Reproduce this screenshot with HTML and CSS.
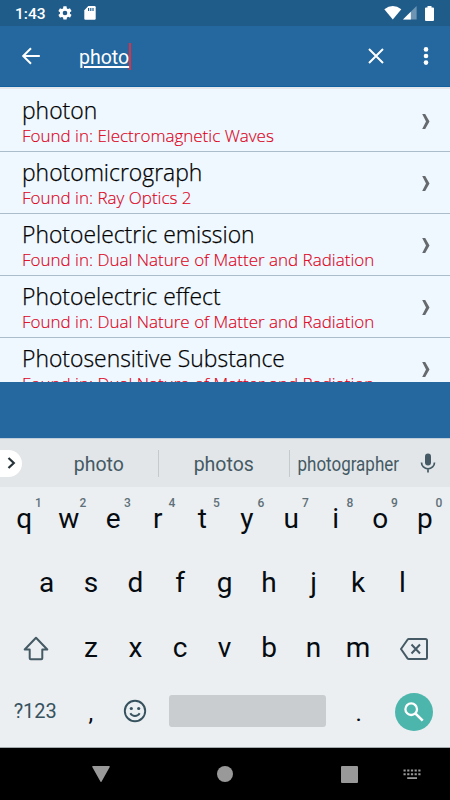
FILE: index.html
```
<!DOCTYPE html>
<html lang="en">
<head>
    <meta charset="UTF-8">
    <title>Search</title>
    <link rel="stylesheet" href="styles.css">
</head>
<body>
<div class="status">
    <span class="time">1:43</span>
    <svg class="gear" width="16" height="16" viewBox="0 0 24 24"><path fill="#fff" d="M19.4 13c0-.3.1-.6.1-1s0-.7-.1-1l2.1-1.600c.2-.2.2-.4.100-.6l-2-3.500c-.1-.2-.4-.3-.6-.2l-2.500 1c-.5-.4-1.100-.7-1.700-1l-.4-2.600c0-.3-.2-.5-.4-.5h-4c-.3 0-.5.2-.5.4l-.4 2.700c-.6.2-1.100.6-1.700 1l-2.500-1c-.2-.1-.5 0-.6.200l-2 3.500c-.1.200-.1.500.1.600l2.100 1.600c0 .3-.1.600-.1 1s0 .7.100 1l-2.100 1.600c-.2.200-.2.400-.1.600l2 3.500c.1.200.4.300.6.200l2.500-1c.5.400 1.100.7 1.700 1l.4 2.600c0 .3.200.4.500.4h4c.2 0 .5-.2.500-.4l.4-2.700c.6-.2 1.200-.6 1.700-1l2.500 1c.2.100.5 0 .6-.2l2-3.500c.1-.2.100-.5-.1-.6zM12 15.500a3.500 3.500 0 1 1 0-7 3.500 3.500 0 0 1 0 7z"/></svg>
    <svg class="sd" width="12" height="14" viewBox="0 0 12 14"><path fill="#fff" d="M4.300 0H10.500Q11.700 0 11.700 1.200V12.500Q11.700 13.800 10.500 13.800H1.400Q.3 13.800.3 12.500V4.200z"/><path fill="#24608d" d="M4 2h1.200v3H4zM6.200 2h1.200v3H6.200zM8.400 2h1.200v3H8.400z"/></svg>
    <div class="status-right">
        <svg width="18" height="14" viewBox="0 0 18 14"><path fill="#fff" d="M.3 3.200Q8.800-3 17.300 3.200L8.800 13.600z"/></svg>
        <svg width="14" height="14" viewBox="0 0 14 14"><path fill="#fff" opacity=".35" d="M13.600 0V13.600H0z"/><path fill="#fff" d="M7.800 5.800V13.600H0z"/></svg>
        <svg class="battery" width="9" height="15" viewBox="0 0 9 15"><path fill="#fff" d="M2.500 0h4v1.400h1.500Q9 1.400 9 2.400V14Q9 15 8 15H1Q0 15 0 14V2.400Q0 1.400 1 1.400h1.500z"/></svg>
    </div>
</div>
<div class="header">
    <svg class="back" width="20" height="18" viewBox="0 0 20 18"><path fill="none" stroke="#fff" stroke-width="2" d="M18.800 9H2.500M10 1.200L2.200 9L10 16.800"/></svg>
    <div class="query"><span>photo</span></div>
    <svg class="clear" width="16" height="16" viewBox="0 0 16 16"><path fill="none" stroke="#fff" stroke-width="2" d="M1 1L15 15M15 1L1 15"/></svg>
    <svg class="more" width="6" height="20" viewBox="0 0 6 20"><g fill="#fff"><circle cx="3" cy="3.400" r="2.300"/><circle cx="3" cy="10" r="2.300"/><circle cx="3" cy="16.600" r="2.300"/></g></svg>
</div>
<ul class="results">
    <li><div><h3>photon</h3><p>Found in: Electromagnetic Waves</p></div><svg class="arrow" width="8" height="15" viewBox="0 0 8 15"><path d="M.2 0H3.200L7.500 7.500L3.200 15H.2L4 7.500z"/></svg></li>
    <li><div><h3>photomicrograph</h3><p>Found in: Ray Optics 2</p></div><svg class="arrow" width="8" height="15" viewBox="0 0 8 15"><path d="M.2 0H3.200L7.500 7.500L3.200 15H.2L4 7.500z"/></svg></li>
    <li><div><h3>Photoelectric emission</h3><p>Found in: Dual Nature of Matter and Radiation</p></div><svg class="arrow" width="8" height="15" viewBox="0 0 8 15"><path d="M.2 0H3.200L7.500 7.500L3.200 15H.2L4 7.500z"/></svg></li>
    <li><div><h3>Photoelectric effect</h3><p>Found in: Dual Nature of Matter and Radiation</p></div><svg class="arrow" width="8" height="15" viewBox="0 0 8 15"><path d="M.2 0H3.200L7.500 7.500L3.200 15H.2L4 7.500z"/></svg></li>
    <li><div><h3>Photosensitive Substance</h3><p>Found in: Dual Nature of Matter and Radiation</p></div><svg class="arrow" width="8" height="15" viewBox="0 0 8 15"><path d="M.2 0H3.200L7.500 7.500L3.200 15H.2L4 7.500z"/></svg></li>
</ul>
<div class="keyboard">
    <div class="suggest">
        <div class="expand"><svg width="9" height="12" viewBox="0 0 9 12"><path fill="none" stroke="#263238" stroke-width="2.200" d="M1.500 1L6.800 6L1.500 11"/></svg></div>
        <span class="word">photo</span>
        <span class="word">photos</span>
        <span class="word last"><b>photographer</b></span>
        <svg class="mic" width="16" height="20" viewBox="0 0 16 20"><rect x="5" y=".5" width="6" height="12" rx="3" fill="#455a64"/><path fill="none" stroke="#455a64" stroke-width="1.700" d="M1.500 9.500a6.500 6.300 0 0 0 13 0M8 16v3.500"/></svg>
    </div>
    <div class="row">
        <span class="key">q<i>1</i></span>
        <span class="key">w<i>2</i></span>
        <span class="key">e<i>3</i></span>
        <span class="key">r<i>4</i></span>
        <span class="key">t<i>5</i></span>
        <span class="key">y<i>6</i></span>
        <span class="key">u<i>7</i></span>
        <span class="key">i<i>8</i></span>
        <span class="key">o<i>9</i></span>
        <span class="key">p<i>0</i></span>
    </div>
    <div class="row middle">
        <span class="key">a</span>
        <span class="key">s</span>
        <span class="key">d</span>
        <span class="key">f</span>
        <span class="key">g</span>
        <span class="key">h</span>
        <span class="key">j</span>
        <span class="key">k</span>
        <span class="key">l</span>
    </div>
    <div class="row">
        <span class="key wide shift"><svg width="26" height="25" viewBox="0 0 26 25"><path fill="none" stroke="#455a64" stroke-width="2" stroke-linejoin="round" d="M13 1.800L24.300 13.500H19.300V22.300Q19.300 23.300 18.300 23.300H7.700Q6.700 23.300 6.700 22.300V13.500H1.700z"/></svg></span>
        <span class="key">z</span>
        <span class="key">x</span>
        <span class="key">c</span>
        <span class="key">v</span>
        <span class="key">b</span>
        <span class="key">n</span>
        <span class="key">m</span>
        <span class="key wide delete"><svg width="28" height="22" viewBox="0 0 28 22"><path fill="none" stroke="#455a64" stroke-width="2" stroke-linejoin="round" d="M8.800 1H25.500Q27 1 27 2.500V19.500Q27 21 25.500 21H8.800Q8 21 7.500 20.300L1 11L7.500 1.700Q8 1 8.800 1zM11.500 6.500L20 15.500M20 6.500L11.500 15.500"/></svg></span>
    </div>
    <div class="row bottom">
        <span class="key sym">?123</span>
        <span class="key comma">,</span>
        <span class="key"><svg width="24" height="24" viewBox="0 0 24 24"><circle cx="12" cy="12" r="10.200" fill="none" stroke="#37525e" stroke-width="1.900"/><circle cx="8.300" cy="9.500" r="1.600" fill="#37525e"/><circle cx="15.700" cy="9.500" r="1.600" fill="#37525e"/><path fill="none" stroke="#37525e" stroke-width="1.900" d="M7.300 14.300Q9 17 12 17T16.700 14.300"/></svg></span>
        <span class="space"></span>
        <span class="key dot">.</span>
        <span class="search"><svg width="20" height="20" viewBox="0 0 20 20"><circle cx="7.200" cy="7.200" r="5.800" fill="none" stroke="#fff" stroke-width="2.300"/><path stroke="#fff" stroke-width="2.600" d="M11.300 11.300L18.700 18.700"/></svg></span>
    </div>
</div>
<div class="nav">
    <svg width="18" height="17" viewBox="0 0 18 17"><path fill="#999" d="M1 0H17Q18.300 0 17.600 1.200L9.600 15.500Q9 16.500 8.400 15.500L.4 1.200Q-.3 0 1 0z"/></svg>
    <svg width="16" height="16" viewBox="0 0 16 16"><circle cx="8" cy="8" r="8" fill="#999"/></svg>
    <svg width="17" height="17" viewBox="0 0 17 17"><rect width="17" height="17" rx="1" fill="#999"/></svg>
    <svg width="18" height="11" viewBox="0 0 18 11"><path stroke="#999" stroke-width="2" stroke-dasharray="2.200 1.500" d="M.5 1.500H17.500M.5 5.300H17.500"/><path stroke="#999" stroke-width="1.800" d="M4.200 9.100H14"/></svg>
</div>
</body>
</html>
```
FILE: styles.css
```
*{ margin:0; padding:0; box-sizing:border-box;}
body{
    display: flex;
    flex-direction: column;
    width: 450px;
    height: 800px;
    overflow: hidden;
    background: #24689f;
    font-family: Roboto, sans-serif;
}
svg{
    display: block;
    flex: none;
}

/* status bar */
.status{
    display: flex;
    align-items: center;
    height: 26px;
    padding: 0 16px 0 15px;
    background: #205c8a;
    color: #fff;
}
.time{
    width: 42px;
    padding-top: 2px;
    font-size: 15.5px;
    font-weight: 500;
}
.sd{
    margin-left: 11px;
}
.status-right{
    display: flex;
    align-items: center;
    gap: 1px;
    margin-left: auto;
}
.battery{
    margin-left: 7px;
}

/* search header */
.header{
    display: flex;
    align-items: center;
    height: 61px;
    padding: 0 21px;
    border-bottom: 1px solid #11609f;
    color: #fff;
}
.query{
    flex: 1;
    margin: 1px 0 0 38px;
    font-size: 19.5px;
}
.query span{
    display: inline-block;
    height: 27px;
    line-height: 30px;
    border-right: 2px solid #dc3044;
    text-decoration: underline;
    text-decoration-thickness: 1.5px;
    text-underline-offset: 2px;
}
.more{
    margin-left: 39px;
}

/* results */
.results{
    height: 295px;
    padding-top: 1px;
    overflow: hidden;
    background: #eff8ff;
    border-top: 2px solid #e4e8ec;
    list-style: none;
    font-family: "Open Sans", sans-serif;
    font-variant-ligatures: none;
}
.results li{
    display: flex;
    justify-content: space-between;
    height: 62px;
    padding: 5px 20px 0 22px;
    border-bottom: 1px solid #abbccb;
}
.results h3{
    font-size: 22.9px;
    font-weight: 300;
    line-height: 32px;
    color: #000;
    -webkit-text-stroke: .25px #000;
}
.results p{
    font-size: 17px;
    font-weight: 300;
    line-height: 18px;
    color: #dc0018;
    -webkit-text-stroke: .15px #dc0018;
}
.arrow{
    margin-top: 19px;
    fill: #666a6e;
}

/* keyboard */
.keyboard{
    height: 310px;
    margin-top: 56px;
    background: #ebeff2;
    border-bottom: 1px solid #a4abae;
}
.suggest{
    display: flex;
    align-items: center;
    height: 49px;
    background: #e2e6e9;
    border-top: 1px solid #c0ced9;
    color: #455a64;
}
.expand{
    display: flex;
    align-items: center;
    justify-content: flex-end;
    width: 22px;
    height: 27px;
    margin-right: 18px;
    padding-right: 6px;
    border-radius: 0 14px 14px 0;
    background: #fff;
}
.word{
    width: 118.5px;
    height: 27px;
    line-height: 29px;
    border-right: 1px solid #c5cacd;
    font-size: 19.5px;
    text-align: center;
}
.word + .word{
    width: 131.5px;
}
.word.last{
    display: flex;
    justify-content: center;
    width: 116px;
    border: 0;
}
.word b{
    font-weight: 400;
    transform: scaleX(.87);
}
.mic{
    margin-left: 14px;
}
.row{
    display: flex;
    justify-content: center;
    height: 64.5px;
    padding-right: 1px;
}
.key{
    position: relative;
    display: flex;
    justify-content: center;
    width: 44.5px;
    line-height: 63px;
    font-size: 28px;
    color: #050b10;
}
.middle .key{
    line-height: 62px;
}
.key i{
    position: absolute;
    top: 9px;
    left: 33px;
    line-height: 14px;
    font-size: 12px;
    font-style: normal;
    font-weight: 500;
    color: #607078;
}
.wide{
    width: 66.5px;
}
.key svg{
    margin-top: 20px;
}
.delete svg{
    margin-top: 22px;
}
.bottom svg{
    margin-top: 18px;
}
.sym{
    width: 66.5px;
    line-height: 61px;
    font-size: 20px;
    color: #37525e;
}
.comma, .dot{
    font-size: 24px;
    line-height: 64px;
}
.space{
    width: 157px;
    height: 32px;
    margin: 14px 11px 0;
    border-radius: 3px;
    background: #c9cdd0;
}
.search{
    display: flex;
    align-items: center;
    justify-content: center;
    width: 38px;
    height: 38px;
    margin: 12px 14px 0;
    border-radius: 50%;
    background: #4db6ac;
}
.search svg{
    margin-top: 0;
}

/* navigation bar */
.nav{
    display: flex;
    align-items: center;
    justify-content: flex-end;
    height: 52px;
    padding-right: 29px;
    background: #000;
}
.nav svg{
    margin-right: 108px;
}
.nav svg:first-child{
    margin-right: 107px;
}
.nav svg:nth-child(3){
    margin-right: 45px;
}
.nav svg:last-child{
    margin-right: 0;
}
```
